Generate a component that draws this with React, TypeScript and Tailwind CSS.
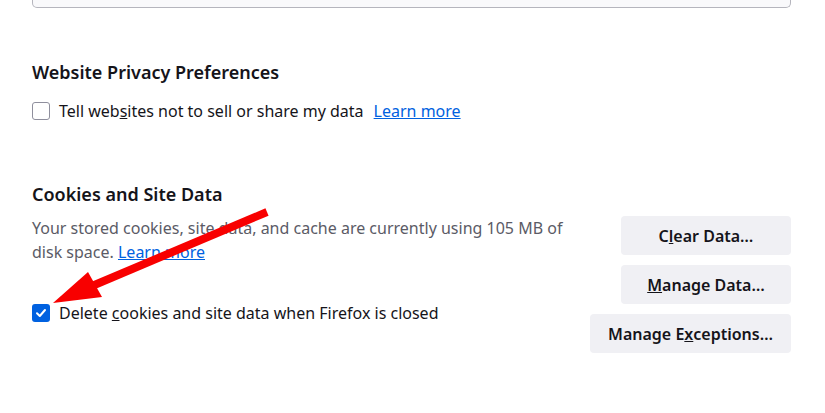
const font = { fontFamily: '"Noto Sans", "Open Sans", sans-serif' };

function Checkbox({ checked }: { checked?: boolean }) {
  if (checked) {
    return (
      <span className="flex h-[18px] w-[18px] shrink-0 items-center justify-center rounded-[3px] bg-[#0061e0]">
        <svg width="12" height="12" viewBox="0 0 12 12" fill="none">
          <path d="M2 6.3 L4.8 9 L10 3" stroke="white" strokeWidth="2" strokeLinecap="round" strokeLinejoin="round" />
        </svg>
      </span>
    );
  }
  return <span className="h-[18px] w-[18px] shrink-0 rounded-[3px] border border-[#8f8f9d] bg-white" />;
}

function Btn({ children, wide }: { children: React.ReactNode; wide?: boolean }) {
  return (
    <button
      className={`flex h-[39px] items-center justify-center whitespace-nowrap rounded-[4px] bg-[#f0f0f4] text-[16px] font-semibold text-[#15141a] ${
        wide ? "px-[18px]" : "w-[170px]"
      }`}
    >
      {children}
    </button>
  );
}

export default function App() {
  return (
    <div className="relative h-[413px] w-[825px] overflow-hidden bg-white pl-[32px] pr-[34px] text-[#15141a]" style={font}>
      {/* bottom of the box above */}
      <div className="h-[8px] rounded-b-[5px] border border-t-0 border-[#b5b5bd] bg-[#f9f9fb]" />

      <h2 className="mt-[52px] text-[18px] font-semibold leading-[24px]">Website Privacy Preferences</h2>
      <label className="mt-[15px] flex h-[24px] items-center gap-[9px] text-[16px]">
        <Checkbox />
        <span>
          Tell web<span className="underline">s</span>ites not to sell or share my data
        </span>
        <a className="ml-[1px] text-[#0061e0] underline">Learn more</a>
      </label>

      <h2 className="mt-[59px] text-[18px] font-semibold leading-[24px]">Cookies and Site Data</h2>

      <div className="mt-[10px] flex items-start justify-between">
        <div className="flex min-w-0 flex-1 flex-col">
          <p className="text-[16px] leading-[24px] text-[#5b5b66]">
            Your stored cookies, site data, and cache are currently using 105 MB of disk space.{" "}
            <a className="text-[#0061e0] underline">Learn more</a>
          </p>
          <label className="mt-[37px] flex h-[24px] items-center gap-[9px] text-[16px]">
            <Checkbox checked />
            <span>
              Delete <span className="underline">c</span>ookies and site data when Firefox is closed
            </span>
          </label>
        </div>
        <div className="flex shrink-0 flex-col items-end gap-[10px]">
          <Btn>
            C<span className="underline">l</span>ear Data…
          </Btn>
          <Btn>
            <span className="underline">M</span>anage Data…
          </Btn>
          <Btn wide>
            Manage E<span className="underline">x</span>ceptions…
          </Btn>
        </div>
      </div>

      {/* annotation arrow */}
      <svg className="pointer-events-none absolute inset-0" width="825" height="413" viewBox="0 0 825 413">
        <line x1="267" y1="212" x2="92" y2="286" stroke="#f80000" strokeWidth="8" />
        <polygon points="53,303 88,272 102,297" fill="#f80000" />
      </svg>
    </div>
  );
}
